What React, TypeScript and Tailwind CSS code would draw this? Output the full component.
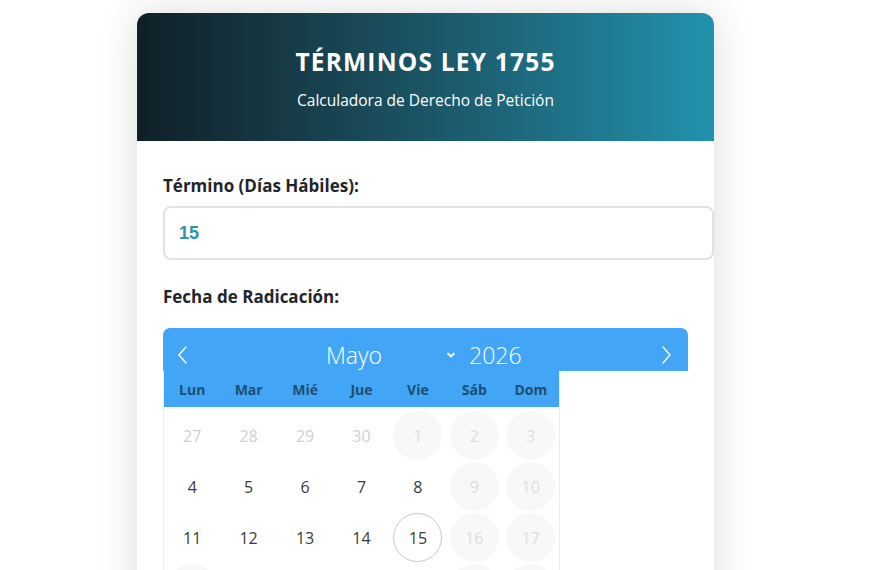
import React from 'react'

type Day = { n: number; kind: 'out' | 'off' | 'on' | 'today' }

const rows: Day[][] = [
  [
    { n: 27, kind: 'out' }, { n: 28, kind: 'out' }, { n: 29, kind: 'out' }, { n: 30, kind: 'out' },
    { n: 1, kind: 'off' }, { n: 2, kind: 'off' }, { n: 3, kind: 'off' },
  ],
  [
    { n: 4, kind: 'on' }, { n: 5, kind: 'on' }, { n: 6, kind: 'on' }, { n: 7, kind: 'on' },
    { n: 8, kind: 'on' }, { n: 9, kind: 'off' }, { n: 10, kind: 'off' },
  ],
  [
    { n: 11, kind: 'on' }, { n: 12, kind: 'on' }, { n: 13, kind: 'on' }, { n: 14, kind: 'on' },
    { n: 15, kind: 'today' }, { n: 16, kind: 'off' }, { n: 17, kind: 'off' },
  ],
  [
    { n: 18, kind: 'off' }, { n: 19, kind: 'on' }, { n: 20, kind: 'on' }, { n: 21, kind: 'on' },
    { n: 22, kind: 'on' }, { n: 23, kind: 'off' }, { n: 24, kind: 'off' },
  ],
]

const weekdays = ['Lun', 'Mar', 'Mié', 'Jue', 'Vie', 'Sáb', 'Dom']

const dayStyle: Record<Day['kind'], string> = {
  out: 'text-[#cfcfcf]',
  off: 'bg-[#f8f8f8] text-[#dedede]',
  on: 'text-[#3a3a3a]',
  today: 'border border-[#c8c8c8] text-[#3a3a3a]',
}

function Chevron({ dir }: { dir: 'left' | 'right' }) {
  return (
    <svg width="12" height="20" viewBox="0 0 12 20" fill="none" stroke="white" strokeWidth="1.4" strokeLinecap="round">
      {dir === 'left' ? <path d="M9 2 L2 10 L9 18" /> : <path d="M3 2 L10 10 L3 18" />}
    </svg>
  )
}

function Calendar() {
  return (
    <div className="w-[525px]">
      {/* Nav */}
      <div className="h-[43px] bg-[#42a5f5] rounded-t-[7px] flex items-center pt-[10px] pl-[14px] pr-[16px]">
        <Chevron dir="left" />
        <div className="ml-[101px] w-[170px] flex items-center">
          <span className="w-[128px] text-center text-white text-[23px] leading-[30px] font-light">Mayo</span>
          <svg className="ml-[28px]" width="10" height="8" viewBox="0 0 10 8" fill="none" stroke="white" strokeWidth="1.8">
            <path d="M1.5 2 L5 5.5 L8.5 2" />
          </svg>
        </div>
        <span className="ml-[9px] text-white text-[23px] leading-[30px] font-light">2026</span>
        <div className="ml-auto">
          <Chevron dir="right" />
        </div>
      </div>

      {/* Month */}
      <div className="w-[397px] border-x border-[#ececec]">
        <div className="h-[36px] bg-[#42a5f5] grid grid-cols-7 items-center">
          {weekdays.map((d) => (
            <span key={d} className="text-center text-[14px] font-bold text-[#1c4f73]">{d}</span>
          ))}
        </div>
        <div className="pt-[3px]">
          {rows.map((row, i) => (
            <div key={i} className="grid grid-cols-7 h-[51px] items-center">
              {row.map((d, j) => (
                <div key={j} className="flex justify-center">
                  <span className={`w-[49px] h-[49px] rounded-full flex items-center justify-center text-[16px] ${dayStyle[d.kind]}`}>
                    {d.n}
                  </span>
                </div>
              ))}
            </div>
          ))}
        </div>
      </div>
    </div>
  )
}

export default function App() {
  return (
    <div className="h-[570px] overflow-hidden bg-white font-['Open_Sans','Noto_Sans',sans-serif]">
      <div className="pl-[137px] pt-[13px]">
        <div className="w-[577px] bg-white rounded-[12px] shadow-[0_0_40px_rgba(0,0,0,0.14)]">
          {/* Header */}
          <div className="h-[128px] rounded-t-[12px] bg-gradient-to-r from-[#0f2027] via-[#1b5566] to-[#2193ae] flex flex-col items-center text-white">
            <h1 className="mt-[33px] text-[24.5px] leading-[32px] font-bold tracking-[1.2px]">TÉRMINOS LEY 1755</h1>
            <p className="mt-[12px] text-[15.5px] leading-[20px]">Calculadora de Derecho de Petición</p>
          </div>

          {/* Form */}
          <div className="pl-[26px] pt-[33px] pb-[40px]">
            <label className="block text-[17px] leading-[24px] font-bold text-[#1f262b]">Término (Días Hábiles):</label>
            <div className="mt-[8px] w-[551px] h-[54px] border-2 border-[#e2e2e2] rounded-[8px] flex items-center pl-[14px]">
              <span className="font-['Liberation_Sans',Arial,sans-serif] font-bold text-[18px] text-[#2e93ab]">15</span>
            </div>
            <label className="mt-[25px] block text-[17px] leading-[24px] font-bold text-[#1f262b]">Fecha de Radicación:</label>
            <div className="mt-[19px]">
              <Calendar />
            </div>
          </div>
        </div>
      </div>
    </div>
  )
}
